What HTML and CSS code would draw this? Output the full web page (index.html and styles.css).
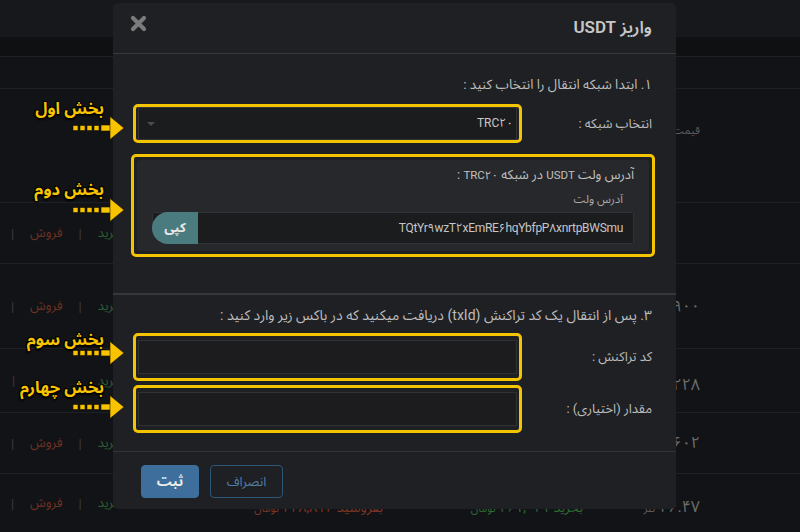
FILE: index.html
```html
<!DOCTYPE html>
<html lang="fa">
<head>
<meta charset="utf-8">
<title>واریز USDT</title>
<link rel="stylesheet" href="styles.css">
</head>
<body>
<div class="page" dir="rtl">
  <div class="topbar"></div>
  <div class="subbar"></div>
  <div class="row r1"></div>
  <div class="row r2"><span class="price label-sm">قیمت</span></div>
  <div class="row r3">
    <span class="price"></span><span class="buy"></span><span class="sell"></span><span class="zero"></span>
    <span class="acts"><span class="g">خرید</span><span class="sep">|</span><span class="r">فروش</span><span class="sep">|</span></span>
  </div>
  <div class="row r4">
    <span class="price num">۲۶,۹۰۰</span><span class="buy"></span><span class="sell"></span><span class="zero"></span>
    <span class="acts"><span class="g">خرید</span><span class="sep">|</span><span class="r">فروش</span><span class="sep">|</span></span>
  </div>
  <div class="row r5">
    <span class="price num low">۲۶,۲۲۸</span><span class="buy"></span><span class="sell"></span><span class="zero"></span>
    <span class="acts partial"><span class="g">خرید</span><span class="sep">|</span></span>
  </div>
  <div class="row r6">
    <span class="price num">۲۶,۶۰۲</span><span class="buy"></span><span class="sell"></span><span class="zero"></span>
    <span class="acts"><span class="g">خرید</span><span class="sep">|</span><span class="r">فروش</span><span class="sep">|</span></span>
  </div>
  <div class="row r7">
    <span class="price num low">۲۶.۴۷ <small>تتر</small></span>
    <span class="buy low">بخرید ۲۶۱,۰۲۱ <small>تومان</small></span>
    <span class="sell low">بفروشید ۲۲۸,۸۱۲ <small>تومان</small></span>
    <span class="zero low">۰</span>
    <span class="acts"><span class="g">خرید</span><span class="sep">|</span><span class="r">فروش</span><span class="sep">|</span></span>
  </div>
</div>

<div class="modal" dir="rtl">
  <div class="modal-head">
    <h1 class="modal-title">واریز USDT</h1>
    <span class="close">
      <svg width="17" height="17" viewBox="0 0 17 17"><path d="M3 3 L14 14 M14 3 L3 14" stroke="#7b7b7b" stroke-width="4.2" stroke-linecap="round"/></svg>
    </span>
  </div>

  <div class="sec sec1">
    <div class="sec-title">۱. ابتدا شبکه انتقال را انتخاب کنید :</div>
    <div class="frow first">
      <label class="flabel">انتخاب شبکه :</label>
      <div class="hl">
        <div class="select"><span class="sel-val" dir="ltr">TRC۲۰</span><span class="caret"></span></div>
      </div>
    </div>
    <div class="hl hl-card">
      <div class="card">
        <div class="card-title">آدرس ولت <span class="lat">USDT</span> در شبکه <span class="lat">TRC۲۰</span> :</div>
        <div class="card-sub">آدرس ولت</div>
        <div class="igroup">
          <div class="addr"><span dir="ltr">TQtYr۹wzT۲xEmRE۶hqYbfpP۸xnrtpBWSmu</span></div>
          <button class="copy">کپی</button>
        </div>
      </div>
    </div>
  </div>

  <div class="sec sec3">
    <div class="sec-title big">۳. پس از انتقال یک کد تراکنش (txId) دریافت میکنید که در باکس زیر وارد کنید :</div>
    <div class="frow first2">
      <label class="flabel">کد تراکنش :</label>
      <div class="hl hl-in"><div class="field"></div></div>
    </div>
    <div class="frow second">
      <label class="flabel">مقدار (اختیاری) :</label>
      <div class="hl hl-in"><div class="field"></div></div>
    </div>
  </div>

  <div class="modal-foot">
    <button class="btn btn-cancel">انصراف</button>
    <button class="btn btn-ok">ثبت</button>
  </div>
</div>

<div class="note n1">بخش اول</div>
<div class="note n2">بخش دوم</div>
<div class="note n3">بخش سوم</div>
<div class="note n4">بخش چهارم</div>

<svg class="arrow a1" width="54" height="26" viewBox="0 0 54 26"><g fill="#f8c400" stroke="#1a1200" stroke-width="0.6"><rect x="2" y="10.5" width="5" height="5"/><rect x="9" y="10.5" width="5" height="5"/><rect x="16" y="10.5" width="5" height="5"/><rect x="23" y="10.5" width="5" height="5"/><rect x="30" y="10" width="11" height="6"/><polygon points="39,1.5 53,13 39,24.5"/></g></svg>
<svg class="arrow a2" width="54" height="26" viewBox="0 0 54 26"><g fill="#f8c400" stroke="#1a1200" stroke-width="0.6"><rect x="2" y="10.5" width="5" height="5"/><rect x="9" y="10.5" width="5" height="5"/><rect x="16" y="10.5" width="5" height="5"/><rect x="23" y="10.5" width="5" height="5"/><rect x="30" y="10" width="11" height="6"/><polygon points="39,1.5 53,13 39,24.5"/></g></svg>
<svg class="arrow a3" width="54" height="26" viewBox="0 0 54 26"><g fill="#f8c400" stroke="#1a1200" stroke-width="0.6"><rect x="2" y="10.5" width="5" height="5"/><rect x="9" y="10.5" width="5" height="5"/><rect x="16" y="10.5" width="5" height="5"/><rect x="23" y="10.5" width="5" height="5"/><rect x="30" y="10" width="11" height="6"/><polygon points="39,1.5 53,13 39,24.5"/></g></svg>
<svg class="arrow a4" width="54" height="26" viewBox="0 0 54 26"><g fill="#f8c400" stroke="#1a1200" stroke-width="0.6"><rect x="2" y="10.5" width="5" height="5"/><rect x="9" y="10.5" width="5" height="5"/><rect x="16" y="10.5" width="5" height="5"/><rect x="23" y="10.5" width="5" height="5"/><rect x="30" y="10" width="11" height="6"/><polygon points="39,1.5 53,13 39,24.5"/></g></svg>
</body>
</html>
```

FILE: styles.css
```css
* { box-sizing: border-box; }

html, body {
  margin: 0;
  padding: 0;
}

body {
  width: 800px;
  height: 532px;
  overflow: hidden;
  position: relative;
  background: #121316;
  font-family: Roboto, "Noto Sans Arabic", "DejaVu Sans", sans-serif;
  color: #bfbfbf;
}

/* ---------- background page ---------- */
.page {
  width: 800px;
  height: 532px;
  display: flex;
  flex-direction: column;
}
.topbar { height: 37px; background: #17181b; flex: none; }
.subbar { height: 20px; background: #0f1012; border-bottom: 1px solid #202125; flex: none; }

.row {
  flex: none;
  display: grid;
  grid-template-columns: 117px 200px 190px 70px 1fr;
  align-items: center;
  padding-right: 100px;
  border-bottom: 1px solid #1f2024;
  font-size: 14px;
}
.r1 { height: 32px; }
.r2 { height: 114px; align-items: start; }
.r3 { height: 61px; }
.r4 { height: 85px; }
.r5 { height: 64px; }
.r6 { height: 61px; }
.r7 { flex: 1; border-bottom: none; }

.price { text-align: right; color: #6d6d6d; }
.label-sm { font-size: 11px; color: #5b5b5b; padding-top: 30px; }
.num { font-size: 16px; }
.price small { font-size: 11px; color: #5d5d5d; }
.low { padding-top: 8px; }
.buy { color: #2b6a33; font-size: 14px; }
.buy small, .sell small { font-size: 11px; }
.sell { color: #7c3526; font-size: 14px; }
.zero { color: #555; font-size: 12px; padding-right: 12px; }

.acts {
  display: flex;
  gap: 16px;
  align-items: center;
  padding-right: 2px;
  font-size: 13px;
}
.acts.partial {
  justify-content: space-between;
  padding-left: 12px;
}
.acts .g { color: #2b5e33; }
.acts .r { color: #6e3124; }
.acts .sep { color: #3b3c3f; }

/* ---------- modal ---------- */
.modal {
  position: absolute;
  left: 113px;
  top: 3px;
  width: 563px;
  height: 506px;
  background: #1f2023;
  border-radius: 5px;
  display: flex;
  flex-direction: column;
  overflow: hidden;
}

.modal-head {
  height: 51px;
  flex: none;
  border-bottom: 1px solid #38393c;
  display: flex;
  justify-content: space-between;
  align-items: center;
  padding: 0 24px 0 17px;
}
.modal-title {
  margin: 0;
  font-size: 17px;
  font-weight: 600;
  color: #c7c7c7;
}
.close {
  align-self: flex-start;
  margin-top: 12px;
  display: block;
  height: 17px;
}
.close svg { display: block; }

.sec { padding: 0 24px 0 20px; }
.sec1 {
  padding-top: 20px;
  padding-bottom: 36px;
  border-bottom: 2px solid #36373a;
}
.sec3 {
  padding-top: 10px;
  padding-bottom: 18px;
}

.sec-title {
  font-size: 13.5px;
  line-height: 20px;
  color: #bdbdbd;
}
.sec-title.big { font-size: 14px; }

.frow {
  display: grid;
  grid-template-columns: 130px 1fr;
  align-items: center;
}
.frow.first { margin-top: 10px; }
.frow.first2 { margin-top: 8px; }
.frow.second { margin-top: 4px; }

.flabel {
  font-size: 13px;
  color: #bdbdbd;
}

.hl {
  border: 3px solid #f5c400;
  border-radius: 5px;
  padding: 0 2px;
}

.select {
  height: 33px;
  background: #1b1c1e;
  border: 1px solid #333437;
  display: flex;
  align-items: center;
  justify-content: space-between;
  padding: 0 3px 0 8px;
}
.sel-val { font-size: 12px; color: #c8c8c8; }
.caret {
  width: 0;
  height: 0;
  border-left: 4px solid transparent;
  border-right: 4px solid transparent;
  border-top: 4px solid #4a4b4e;
}

.hl-card {
  margin: 11px -3px 0 -2px;
  padding: 3px;
}
.card {
  background: #27282b;
  border-radius: 4px;
  padding: 5px 15px 7px 15px;
}
.card-title {
  font-size: 13px;
  line-height: 20px;
  color: #c0c0c0;
}
.card-title .lat { font-size: 11.5px; }
.card-sub {
  margin-top: 5px;
  font-size: 11.5px;
  line-height: 18px;
  color: #a9a9a9;
  padding-right: 11px;
}
.igroup {
  margin-top: 4px;
  height: 32px;
  display: flex;
  background: #1b1c1e;
  border: 1px solid #313235;
  border-radius: 2px 2px 2px 16px;
}
.addr {
  flex: 1;
  display: flex;
  align-items: center;
  padding-right: 10px;
  font-size: 12px;
  letter-spacing: -0.3px;
  color: #c6c6c6;
}
.copy {
  width: 46px;
  margin: -1px;
  border: none;
  border-radius: 16px 0 0 16px;
  background: #4a7c7f;
  color: #e6e6e6;
  font-family: inherit;
  font-size: 13px;
  font-weight: 700;
  padding: 0;
}

.hl-in { padding: 4px 2px; }
.field {
  height: 34px;
  background: #1c1c1e;
  border: 1px solid #303134;
}

.modal-foot {
  flex: 1;
  border-top: 1px solid #333437;
  display: flex;
  justify-content: flex-end;
  align-items: flex-start;
  gap: 11px;
  padding: 13px 0 0 28px;
}
.btn {
  height: 33px;
  border-radius: 4px;
  font-family: inherit;
  font-size: 13px;
  padding: 0;
}
.btn-ok {
  width: 58px;
  background: #3e6f9c;
  border: 1px solid #3e6f9c;
  color: #ececec;
  font-weight: 700;
  font-size: 14px;
}
.btn-cancel {
  width: 73px;
  background: transparent;
  border: 1px solid #2c5678;
  color: #4f7fa9;
}

/* ---------- annotations ---------- */
.note {
  position: absolute;
  right: 696px;
  font-size: 16.5px;
  line-height: 24px;
  font-weight: 700;
  color: #f8c400;
  white-space: nowrap;
  text-shadow: 1px 1px 0 #000, -1px -1px 0 #000, 1px -1px 0 #000, -1px 1px 0 #000, 0 2px 2px #000;
}
.n1 { top: 97px; }
.n2 { top: 178px; }
.n3 { top: 328px; }
.n4 { top: 376px; }

.arrow { position: absolute; left: 71px; }
.a1 { top: 115px; }
.a2 { top: 197px; }
.a3 { top: 340px; }
.a4 { top: 394px; }
```
